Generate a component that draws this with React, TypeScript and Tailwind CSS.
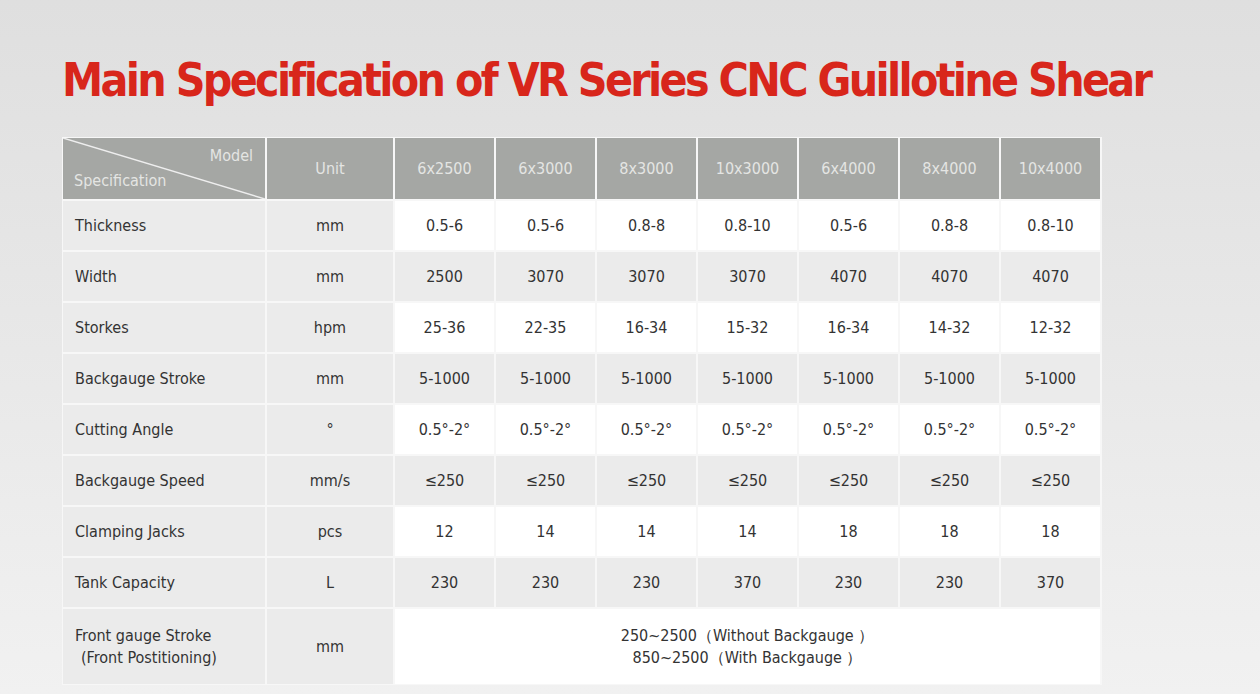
import React from 'react';

const models = ['6x2500', '6x3000', '8x3000', '10x3000', '6x4000', '8x4000', '10x4000'];

const rows: { name: string; unit: string; values: string[] }[] = [
    { name: 'Thickness', unit: 'mm', values: ['0.5-6', '0.5-6', '0.8-8', '0.8-10', '0.5-6', '0.8-8', '0.8-10'] },
    { name: 'Width', unit: 'mm', values: ['2500', '3070', '3070', '3070', '4070', '4070', '4070'] },
    { name: 'Storkes', unit: 'hpm', values: ['25-36', '22-35', '16-34', '15-32', '16-34', '14-32', '12-32'] },
    { name: 'Backgauge Stroke', unit: 'mm', values: Array(7).fill('5-1000') },
    { name: 'Cutting Angle', unit: '°', values: Array(7).fill('0.5°-2°') },
    { name: 'Backgauge Speed', unit: 'mm/s', values: Array(7).fill('≤250') },
    { name: 'Clamping Jacks', unit: 'pcs', values: ['12', '14', '14', '14', '18', '18', '18'] },
    { name: 'Tank Capacity', unit: 'L', values: ['230', '230', '230', '370', '230', '230', '370'] },
];

const font = { fontFamily: '"DejaVu Sans Condensed", "Liberation Sans Narrow", Roboto, sans-serif' };

const App: React.FC = () => {
    return (
        <div className="w-[1260px] h-[694px] overflow-hidden bg-gradient-to-b from-[#dfdfdf] to-[#f1f1f1]" style={font}>
            <div className="pl-[62px] pt-[50px]">
                <h1 className="text-[46px] leading-[60px] font-bold text-[#d8261b] tracking-[-2.7px] whitespace-nowrap">
                    Main Specification of VR Series CNC Guillotine Shear
                </h1>

                {/* Spec table */}
                <div className="mt-[27px] w-[1040px] bg-[#f7f7f7] p-[1px] grid grid-cols-[202px_126px_repeat(7,99px)] gap-[2px] text-[16px] text-[#333333]">
                    {/* Header */}
                    <div className="relative h-[61px] bg-[#a5a7a4] text-[#e4e5e3]">
                        <svg className="absolute inset-0" width="202" height="61" viewBox="0 0 202 61">
                            <line x1="0" y1="0" x2="202" y2="61" stroke="#eeeeee" strokeWidth="1.5" />
                        </svg>
                        <span className="absolute right-[12px] top-[6px]">Model</span>
                        <span className="absolute left-[11px] bottom-[6px]">Specification</span>
                    </div>
                    <div className="h-[61px] bg-[#a5a7a4] text-[#e4e5e3] flex items-center justify-center">Unit</div>
                    {models.map((m) => (
                        <div key={m} className="h-[61px] bg-[#a5a7a4] text-[#e4e5e3] flex items-center justify-center">
                            {m}
                        </div>
                    ))}

                    {/* Body rows */}
                    {rows.map((r, i) => (
                        <React.Fragment key={r.name}>
                            <div className="h-[49px] bg-[#ebebeb] flex items-center pl-[12px]">{r.name}</div>
                            <div className="h-[49px] bg-[#ebebeb] flex items-center justify-center">{r.unit}</div>
                            {r.values.map((v, j) => (
                                <div
                                    key={j}
                                    className={`h-[49px] flex items-center justify-center ${i % 2 === 0 ? 'bg-white' : 'bg-[#ebebeb]'}`}
                                >
                                    {v}
                                </div>
                            ))}
                        </React.Fragment>
                    ))}

                    <div className="h-[75px] bg-[#ebebeb] flex flex-col justify-center pl-[12px] leading-[22px]">
                        <span>Front gauge Stroke</span>
                        <span className="pl-[6px]">(Front Postitioning)</span>
                    </div>
                    <div className="h-[75px] bg-[#ebebeb] flex items-center justify-center">mm</div>
                    <div className="col-span-7 h-[75px] bg-white flex flex-col items-center justify-center leading-[22px]">
                        <span>250~2500（Without Backgauge ）</span>
                        <span>850~2500（With Backgauge ）</span>
                    </div>
                </div>
            </div>
        </div>
    );
};

export default App;
